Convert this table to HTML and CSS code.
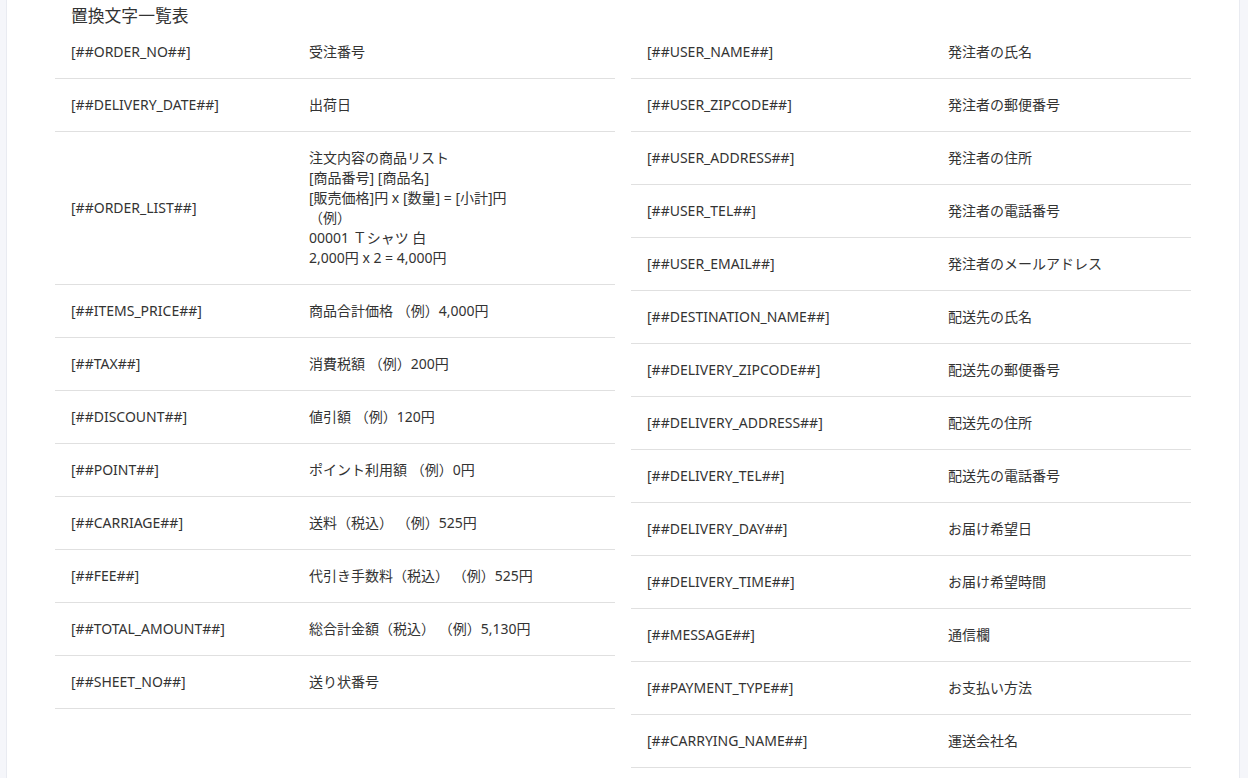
FILE: index.html
```html
<!DOCTYPE html>
<html lang="ja">
<head>
<meta charset="utf-8">
<link rel="stylesheet" href="styles.css">
</head>
<body>
<div class="card">
  <h2 class="title">置換文字一覧表</h2>
  <div class="cols">
    <table class="tbl tbl-left">
      <tr><td class="key">[##ORDER_NO##]</td><td>受注番号</td></tr>
      <tr><td class="key">[##DELIVERY_DATE##]</td><td>出荷日</td></tr>
      <tr><td class="key">[##ORDER_LIST##]</td><td>注文内容の商品リスト<br>[商品番号] [商品名]<br>[販売価格]円 x [数量] = [小計]円<br>（例）<br>00001 Ｔシャツ 白<br>2,000円 x 2 = 4,000円</td></tr>
      <tr><td class="key">[##ITEMS_PRICE##]</td><td>商品合計価格 （例）4,000円</td></tr>
      <tr><td class="key">[##TAX##]</td><td>消費税額 （例）200円</td></tr>
      <tr><td class="key">[##DISCOUNT##]</td><td>値引額 （例）120円</td></tr>
      <tr><td class="key">[##POINT##]</td><td>ポイント利用額 （例）0円</td></tr>
      <tr><td class="key">[##CARRIAGE##]</td><td>送料（税込） （例）525円</td></tr>
      <tr><td class="key">[##FEE##]</td><td>代引き手数料（税込） （例）525円</td></tr>
      <tr><td class="key">[##TOTAL_AMOUNT##]</td><td>総合計金額（税込） （例）5,130円</td></tr>
      <tr><td class="key">[##SHEET_NO##]</td><td>送り状番号</td></tr>
    </table>
    <table class="tbl tbl-right">
      <tr><td class="key">[##USER_NAME##]</td><td>発注者の氏名</td></tr>
      <tr><td class="key">[##USER_ZIPCODE##]</td><td>発注者の郵便番号</td></tr>
      <tr><td class="key">[##USER_ADDRESS##]</td><td>発注者の住所</td></tr>
      <tr><td class="key">[##USER_TEL##]</td><td>発注者の電話番号</td></tr>
      <tr><td class="key">[##USER_EMAIL##]</td><td>発注者のメールアドレス</td></tr>
      <tr><td class="key">[##DESTINATION_NAME##]</td><td>配送先の氏名</td></tr>
      <tr><td class="key">[##DELIVERY_ZIPCODE##]</td><td>配送先の郵便番号</td></tr>
      <tr><td class="key">[##DELIVERY_ADDRESS##]</td><td>配送先の住所</td></tr>
      <tr><td class="key">[##DELIVERY_TEL##]</td><td>配送先の電話番号</td></tr>
      <tr><td class="key">[##DELIVERY_DAY##]</td><td>お届け希望日</td></tr>
      <tr><td class="key">[##DELIVERY_TIME##]</td><td>お届け希望時間</td></tr>
      <tr><td class="key">[##MESSAGE##]</td><td>通信欄</td></tr>
      <tr><td class="key">[##PAYMENT_TYPE##]</td><td>お支払い方法</td></tr>
      <tr><td class="key">[##CARRYING_NAME##]</td><td>運送会社名</td></tr>
    </table>
  </div>
</div>
</body>
</html>
```
FILE: styles.css
```css
html, body {
  margin: 0;
  padding: 0;
  background: #f5f6fa;
  font-family: "Noto Sans", "Noto Sans CJK JP", sans-serif;
  color: #333;
}
.card {
  margin: 0 8px 0 6px;
  background: #fff;
  border-left: 1px solid #e9ebf1;
  border-right: 1px solid #e9ebf1;
  padding: 0 47px 40px 48px;
  min-height: 778px;
  box-sizing: border-box;
}
.title {
  margin: 0;
  padding: 5px 0 0 16px;
  font-size: 16.8px;
  font-weight: 400;
  line-height: 21px;
  color: #333;
}
.cols {
  display: flex;
  gap: 16px;
  align-items: flex-start;
}
.tbl {
  width: 560px;
  border-collapse: collapse;
  table-layout: fixed;
  font-size: 14px;
  line-height: 20px;
}
.tbl td {
  padding: 16px;
  border-bottom: 1px solid #e0e0e0;
  vertical-align: middle;
  color: #333;
}
.tbl-left td.key { width: 206px; }
.tbl-right td.key { width: 269px; }
```
